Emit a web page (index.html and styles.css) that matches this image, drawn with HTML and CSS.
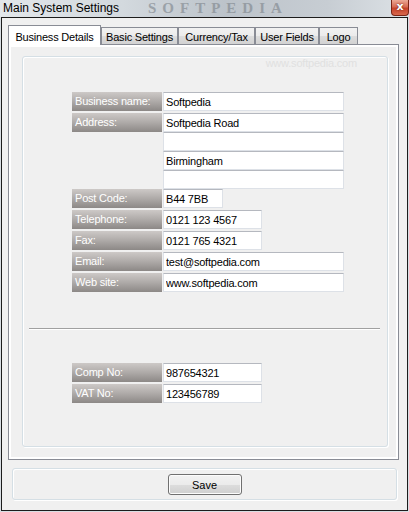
FILE: index.html
```html
<!DOCTYPE html>
<html lang="en">
<head>
  <meta charset="UTF-8">
  <title>Main System Settings</title>
  <link rel="stylesheet" href="styles.css">
</head>
<body>
  <div class="window">
    <div class="titlebar">
      <span class="title">Main System Settings</span>
      <span class="mark">SOFTPEDIA</span>
      <span class="close">x</span>
    </div>

    <div class="client">
      <div class="tabs">
        <div class="tab active tab-business">Business Details</div>
        <div class="tab tab-basic">Basic Settings</div>
        <div class="tab tab-currency">Currency/Tax</div>
        <div class="tab tab-user">User Fields</div>
        <div class="tab tab-logo">Logo</div>
      </div>

      <div class="tab-page">
        <div class="group">
          <span class="site-mark">www.softpedia.com</span>

          <div class="form">
            <div class="row">
              <label class="label">Business name:</label>
              <input class="field wide" value="Softpedia">
            </div>
            <div class="row address">
              <label class="label">Address:</label>
              <div class="stack">
                <input class="field wide" value="Softpedia Road">
                <input class="field wide" value="">
                <input class="field wide" value="Birmingham">
                <input class="field wide" value="">
              </div>
            </div>
            <div class="row">
              <label class="label">Post Code:</label>
              <input class="field short" value="B44 7BB">
            </div>
            <div class="row">
              <label class="label">Telephone:</label>
              <input class="field medium" value="0121 123 4567">
            </div>
            <div class="row">
              <label class="label">Fax:</label>
              <input class="field medium" value="0121 765 4321">
            </div>
            <div class="row">
              <label class="label">Email:</label>
              <input class="field wide" value="test@softpedia.com">
            </div>
            <div class="row">
              <label class="label">Web site:</label>
              <input class="field wide" value="www.softpedia.com">
            </div>
          </div>

          <div class="separator"></div>

          <div class="form">
            <div class="row">
              <label class="label">Comp No:</label>
              <input class="field medium" value="987654321">
            </div>
            <div class="row">
              <label class="label">VAT No:</label>
              <input class="field medium" value="123456789">
            </div>
          </div>
        </div>
      </div>

      <div class="footer">
        <button class="btn">Save</button>
      </div>
    </div>
  </div>
</body>
</html>
```

FILE: styles.css
```css
body {
  margin: 0;
  background: #d9dee3;
  font-family: "Liberation Sans", Arial, sans-serif;
  font-size: 11px;
  letter-spacing: -0.2px;
  color: #000;
}

.window {
  width: 409px;
  height: 512px;
  display: flex;
  flex-direction: column;
}

/* title bar */
.titlebar {
  position: relative;
  height: 17px;
  display: flex;
  justify-content: space-between;
  align-items: flex-start;
  background: linear-gradient(to right, #e2e6ea 0, #d3d9de 30%, #bcc3ca 55%, #c7cdd3 80%, #dde2e6 100%);
}

.title {
  position: relative;
  z-index: 1;
  padding-left: 3px;
  font-size: 12px;
  line-height: 17px;
  letter-spacing: 0;
}

.mark {
  position: absolute;
  left: 148px;
  top: 1px;
  font: bold 15px/15px "Liberation Serif", serif;
  letter-spacing: 6px;
  color: #7c838a;
  opacity: 0.6;
}

.close {
  position: relative;
  z-index: 1;
  box-sizing: border-box;
  width: 18px;
  height: 16px;
  border: 1px solid #7a2516;
  border-top: 0;
  border-radius: 0 0 4px 4px;
  background: linear-gradient(#eba996, #d86a52 45%, #c7432a 55%, #d8674c);
  color: #fff;
  font: bold 11px/14px "DejaVu Sans", sans-serif;
  text-align: center;
  text-shadow: 0 0 2px #5a1a10;
}

/* window body */
.client {
  flex: 1;
  margin: 0 1px 1px;
  border: 1px solid #1c1c1c;
  background: #f0f0f0;
  display: flex;
  flex-direction: column;
}

.tabs {
  display: flex;
  align-items: flex-end;
  height: 19px;
  margin: 7px 0 0 6px;
}

.tab {
  box-sizing: border-box;
  height: 17px;
  padding-top: 3px;
  line-height: 13px;
  text-align: center;
  white-space: nowrap;
  border: 1px solid #898c95;
  border-bottom: 0;
  background: linear-gradient(#f2f2f2, #ebebeb 50%, #dddddd 50%, #d2d2d2);
}

.tab.active {
  height: 20px;
  padding-top: 4px;
  line-height: 14px;
  margin-bottom: -1px;
  background: #fff;
  z-index: 1;
}

.tab-business { width: 93px; }
.tab-basic { width: 77px; }
.tab-currency { width: 77px; }
.tab-user { width: 64px; }
.tab-logo { width: 39px; }

.tab-page {
  box-sizing: border-box;
  height: 416px;
  margin: 0 8px 0 6px;
  padding: 11px 10px 12px 13px;
  border: 1px solid #898c95;
  box-shadow: inset 0 0 0 2px #fff;
  display: flex;
}

.group {
  flex: 1;
  position: relative;
  padding-top: 35px;
  border: 1px solid #d5dfe5;
  border-radius: 3px;
  box-shadow: inset 1px 1px 0 #fff, 1px 1px 0 #fff;
}

.site-mark {
  position: absolute;
  right: 30px;
  top: 0;
  color: #e0e0e0;
  font-size: 11px;
}

/* form rows */
.form {
  margin-left: 49px;
}

.row {
  display: flex;
  align-items: flex-start;
  gap: 1px;
  margin-bottom: 2px;
}

.row.address {
  margin-bottom: 0;
}

.label {
  box-sizing: border-box;
  width: 90px;
  height: 19px;
  padding-left: 3px;
  line-height: 19px;
  color: #fff;
  background: linear-gradient(#cdc9c7, #aeaaa8 50%, #8c8886);
}

.stack {
  display: flex;
  flex-direction: column;
}

.field {
  box-sizing: border-box;
  height: 19px;
  margin: 0;
  padding: 0 2px;
  border: 1px solid #dde1e7;
  border-top-color: #b5b8bf;
  background: #fff;
  font: inherit;
  letter-spacing: inherit;
  color: #000;
  outline: none;
}

.wide { width: 181px; }
.medium { width: 99px; }
.short { width: 60px; }

.separator {
  margin: 36px 7px 33px 6px;
  border-top: 1px solid #a0a0a0;
  border-bottom: 1px solid #fff;
}

/* bottom bar */
.footer {
  box-sizing: border-box;
  height: 32px;
  margin: 8px 10px 10px;
  padding-top: 5px;
  border: 1px solid #d5dfe5;
  border-radius: 3px;
  box-shadow: inset 1px 1px 0 #fff, 1px 1px 0 #fff;
  display: flex;
  justify-content: center;
  align-items: flex-start;
}

.btn {
  box-sizing: border-box;
  width: 74px;
  height: 21px;
  padding: 0;
  border: 1px solid #707070;
  border-radius: 3px;
  background: linear-gradient(#f2f2f2, #ebebeb 50%, #dddddd 50%, #cfcfcf);
  box-shadow: inset 0 0 0 1px #fcfcfc;
  font: inherit;
  letter-spacing: 0;
  color: #000;
}
```
